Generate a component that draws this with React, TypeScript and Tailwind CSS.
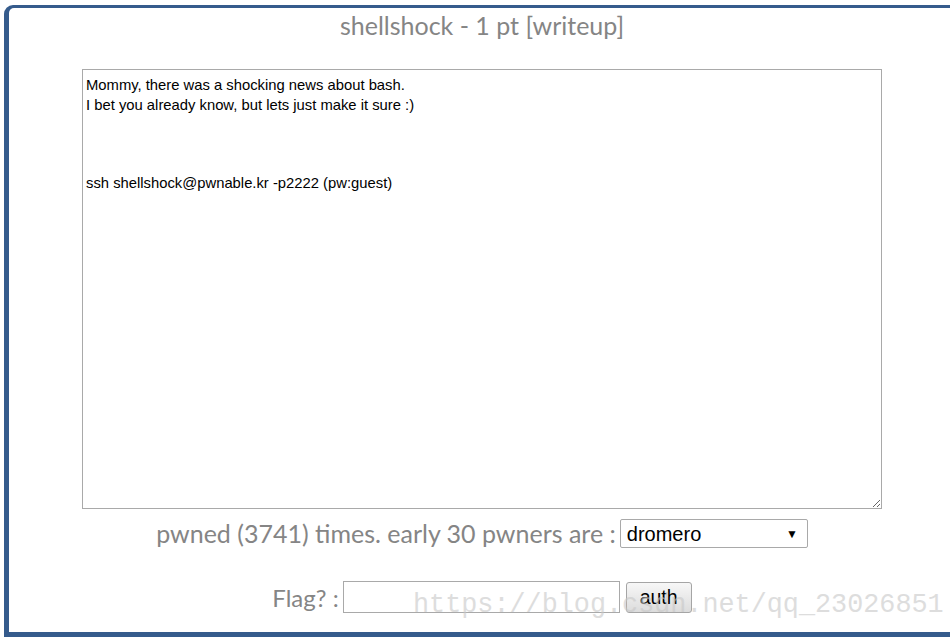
import React from "react";

const intro = `Mommy, there was a shocking news about bash.
I bet you already know, but lets just make it sure :)



ssh shellshock@pwnable.kr -p2222 (pw:guest)`;

export default function App() {
  return (
    <div className="relative h-[637px] w-[950px] overflow-hidden bg-white">
      {/* blue frame of the challenge panel, open past the right edge */}
      <div className="ml-[4px] mt-[5px] h-[632px] w-[1000px] rounded-tl-[9px] bg-[#355b8c] pb-[5px] pl-[5px] pt-[3px]">
        <div className="h-full w-full rounded-tl-[5px] bg-white">
          <div className="flex w-[946px] flex-col items-center">
            <h1 className="mt-[2px] font-[Lato,'Open_Sans',sans-serif] text-[25px] leading-[30px] text-[#858585]">
              shellshock - 1 pt [writeup]
            </h1>

            <textarea
              readOnly
              defaultValue={intro}
              className="mt-[29px] box-border h-[440px] w-[800px] border border-[#a9a9a9] px-[3px] py-[6px] font-['Liberation_Sans',Arial,sans-serif] text-[14.8px] leading-[19.5px] text-black outline-none"
            />

            <div className="mt-[10px] flex h-[29px] items-center gap-[4px]">
              <span className="font-[Lato,'Open_Sans',sans-serif] text-[25px] leading-[29px] text-[#858585]">
                pwned (3741) times. early 30 pwners are :
              </span>
              <div className="flex h-[29px] w-[188px] items-center justify-between rounded-[2px] border border-[#a9a9a9] bg-white pl-[6px] pr-[9px] font-['Liberation_Sans',Arial,sans-serif] text-[20px] text-black">
                <span>dromero</span>
                <span className="text-[12px]">▼</span>
              </div>
            </div>

            <form className="mt-[33px] flex h-[32px] items-center" onSubmit={(e) => e.preventDefault()}>
              <label className="mr-[4px] font-[Lato,'Open_Sans',sans-serif] text-[24px] leading-[29px] text-[#858585]">
                Flag? :
              </label>
              <input className="box-border h-[32px] w-[277px] border border-[#a9a9a9] bg-white px-1 outline-none" />
              <button
                type="submit"
                className="ml-[6px] h-[31px] w-[66px] rounded-[3px] border border-[#a5a5a5] bg-gradient-to-b from-[#f7f7f7] to-[#dcdcdc] font-['Liberation_Sans',Arial,sans-serif] text-[19.5px] leading-[26px] text-black"
              >
                auth
              </button>
            </form>
          </div>
        </div>
      </div>

      <div className="pointer-events-none absolute left-[413px] top-[587px] whitespace-nowrap font-['Liberation_Mono','DejaVu_Sans_Mono',monospace] text-[26.8px] leading-[36px] text-[#c8c8c8] opacity-60">
        https://blog.csdn.net/qq_23026851
      </div>
    </div>
  );
}
